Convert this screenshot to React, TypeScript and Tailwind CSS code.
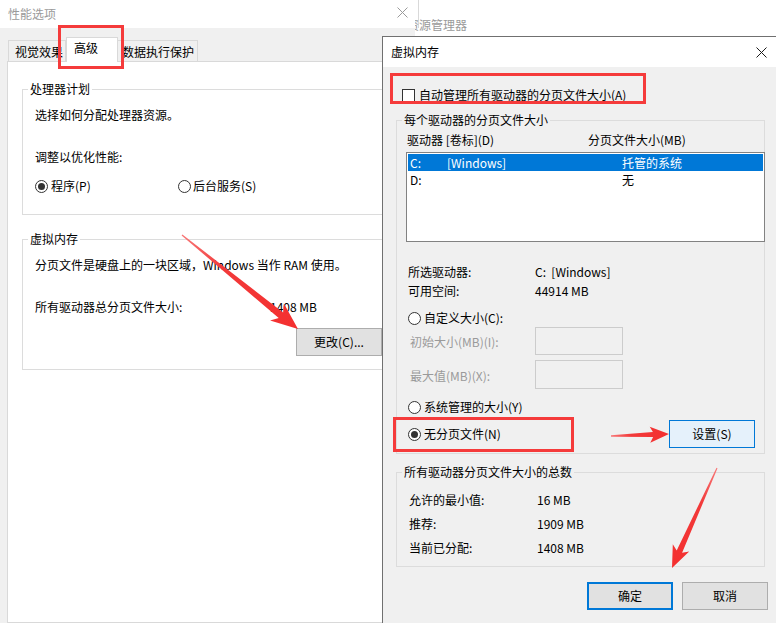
import React from "react";

type Pt = [number, number];

// Tapered annotation arrow: thin tail, widening shaft, barbed head.
function arrowPoints(
  t: Pt,
  p: Pt,
  headLen: number,
  headHalf: number,
  neckHalf: number,
  tailHalf: number,
  notch: number
) {
  const dx = p[0] - t[0];
  const dy = p[1] - t[1];
  const len = Math.hypot(dx, dy);
  const ux = dx / len;
  const uy = dy / len;
  const nx = -uy;
  const ny = ux;
  const bx = p[0] - ux * headLen;
  const by = p[1] - uy * headLen;
  const kx = p[0] - ux * (headLen - notch);
  const ky = p[1] - uy * (headLen - notch);
  const pts: Pt[] = [
    [t[0] + nx * tailHalf, t[1] + ny * tailHalf],
    [kx + nx * neckHalf, ky + ny * neckHalf],
    [bx + nx * headHalf, by + ny * headHalf],
    p,
    [bx - nx * headHalf, by - ny * headHalf],
    [kx - nx * neckHalf, ky - ny * neckHalf],
    [t[0] - nx * tailHalf, t[1] - ny * tailHalf],
  ];
  return pts.map((q) => q.map((v) => v.toFixed(1)).join(",")).join(" ");
}

const arrows: { id: string; t: Pt; p: Pt; h: number; hw: number; nw: number; tw: number; notch: number }[] = [
  { id: "a1", t: [182, 235], p: [298, 329], h: 27, hw: 11, nw: 3.5, tw: 0.6, notch: 5 },
  { id: "a2", t: [611, 436], p: [669, 434], h: 19, hw: 8, nw: 2.6, tw: 0.7, notch: 3 },
  { id: "a3", t: [717, 468], p: [672, 568], h: 22, hw: 9, nw: 3, tw: 0.6, notch: 4 },
];

function Radio({ checked }: { checked?: boolean }) {
  return (
    <span className="flex h-[13px] w-[13px] shrink-0 items-center justify-center rounded-full border border-[#333333] bg-white">
      {checked && <span className="h-[7px] w-[7px] rounded-full bg-[#333333]" />}
    </span>
  );
}

function Group({
  title,
  className,
  children,
}: {
  title: string;
  className?: string;
  children: React.ReactNode;
}) {
  return (
    <fieldset className={"min-w-0 border border-[#dcdcdc] " + (className ?? "")}>
      <legend className="ml-[5px] px-[2px] leading-4">{title}</legend>
      {children}
    </fieldset>
  );
}

function CloseGlyph({ size, color }: { size: number; color: string }) {
  return (
    <svg width={size} height={size} viewBox={`0 0 ${size} ${size}`} className="shrink-0">
      <path d={`M0.5 0.5 L${size - 0.5} ${size - 0.5} M${size - 0.5} 0.5 L0.5 ${size - 0.5}`} stroke={color} strokeWidth="1" />
    </svg>
  );
}

export default function App() {
  return (
    <div className="relative h-[623px] w-[776px] overflow-hidden bg-white font-['Microsoft_YaHei','Noto_Sans_CJK_SC','Noto_Sans',sans-serif] text-[12px] leading-4 text-black">
      {/* explorer window in the background */}
      <div className="absolute left-[400px] top-0 h-[80px] w-[400px] bg-white">
        <div className="ml-[18px] h-[28px] border-l border-[#d9d9d9]" />
        <div className="-mt-[11px] pl-[7px] text-[#9a9a9a]">资源管理器</div>
      </div>

      {/* 性能选项 window */}
      <div className="absolute left-0 top-0 flex h-[623px] w-[415px] flex-col bg-[#f0f0f0]">
        <div className="flex h-[28px] shrink-0 items-center justify-between bg-white pl-[8px] pr-[7px] text-[#9a9a9a]">
          <span>性能选项</span>
          <span className="-mt-[4px]">
            <CloseGlyph size={11} color="#9a9a9a" />
          </span>
        </div>

        <div className="flex flex-1 flex-col pl-[7px] pt-[9px]">
          {/* tabs */}
          <div className="relative z-10 -mb-px flex h-[25px] items-end">
            <div className="mb-px ml-px h-[21px] w-[58px] border border-b-0 border-[#d9d9d9] pl-[6px] pt-[3px]">视觉效果</div>
            <div className="h-[25px] w-[52px] border border-b-0 border-[#d9d9d9] bg-white pl-[7px] pt-[2px]">高级</div>
            <div className="mb-px h-[21px] w-[80px] border border-b-0 border-l-0 border-[#d9d9d9] pl-[4px] pt-[3px]">数据执行保护</div>
          </div>

          {/* tab page */}
          <div className="w-[402px] flex-1 border border-[#d9d9d9] bg-white px-[14px] pt-[19px]">
            <Group title="处理器计划" className="w-[372px]">
              <div className="pb-[20px] pl-[12px] pt-[10px]">
                <div>选择如何分配处理器资源。</div>
                <div className="mt-[26px]">调整以优化性能:</div>
                <div className="mt-[13px] flex h-4 items-center">
                  <div className="flex w-[143px] items-center gap-[3px]">
                    <Radio checked />
                    <span>程序(P)</span>
                  </div>
                  <div className="flex items-center gap-[2px]">
                    <Radio />
                    <span>后台服务(S)</span>
                  </div>
                </div>
              </div>
            </Group>

            <Group title="虚拟内存" className="mt-[16px] w-[372px]">
              <div className="pb-[13px] pl-[12px] pt-[10px]">
                <div>分页文件是硬盘上的一块区域，Windows 当作 RAM 使用。</div>
                <div className="mt-[26px] flex">
                  <span className="w-[235px]">所有驱动器总分页文件大小:</span>
                  <span>1408 MB</span>
                </div>
                <button className="ml-[261px] mt-[13px] flex h-[28px] w-[86px] items-center justify-center border border-[#adadad] bg-[#e1e1e1]">
                  更改(C)...
                </button>
              </div>
            </Group>
          </div>
        </div>
      </div>

      {/* 虚拟内存 dialog */}
      <div className="absolute left-[382px] top-[36px] flex h-[600px] w-[400px] flex-col border border-[#707070] bg-[#f0f0f0]">
        <div className="flex h-[30px] shrink-0 items-center justify-between bg-white pl-[8px] pr-[14px]">
          <span>虚拟内存</span>
          <CloseGlyph size={11} color="#1a1a1a" />
        </div>

        <div className="pl-[13px]">
          <div className="mt-[20px] flex h-4 items-center gap-[4px] pl-[6px]">
            <span className="h-[13px] w-[13px] border border-[#333333] bg-white" />
            <span>自动管理所有驱动器的分页文件大小(A)</span>
          </div>

          <Group title="每个驱动器的分页文件大小" className="mt-[9px] w-[369px]">
            <div className="pb-[5px] pl-[9px] pt-[4px]">
              <div className="flex pl-px">
                <span className="w-[181px]">驱动器 [卷标](D)</span>
                <span>分页文件大小(MB)</span>
              </div>
              <div className="mt-[4px] h-[90px] w-[359px] border border-[#828282] bg-white p-px">
                <div className="flex h-[17px] items-center bg-[#0078d7] pl-[2px] text-white">
                  <span className="w-[37px]">C:</span>
                  <span className="w-[175px]">[Windows]</span>
                  <span>托管的系统</span>
                </div>
                <div className="flex h-[17px] items-center pl-[2px]">
                  <span className="w-[212px]">D:</span>
                  <span>无</span>
                </div>
              </div>

              <div className="mt-[20px] flex h-[19px] items-center pl-[2px]">
                <span className="w-[127px]">所选驱动器:</span>
                <span>C:&nbsp;&nbsp;[Windows]</span>
              </div>
              <div className="flex h-[19px] items-center pl-[2px]">
                <span className="w-[127px]">可用空间:</span>
                <span>44914 MB</span>
              </div>

              <div className="mt-[10px] flex h-4 items-center gap-[3px] pl-[2px]">
                <Radio />
                <span>自定义大小(C):</span>
              </div>
              <div className="mt-[1px] flex h-[28px] items-center pl-[4px] text-[#9a9a9a]">
                <span className="w-[125px] pt-[2px]">初始大小(MB)(I):</span>
                <span className="h-[28px] w-[88px] border border-[#cccccc]" />
              </div>
              <div className="mt-[5px] flex h-[29px] items-center pl-[4px] text-[#9a9a9a]">
                <span className="w-[125px] pt-[3px]">最大值(MB)(X):</span>
                <span className="h-[29px] w-[88px] border border-[#cccccc]" />
              </div>

              <div className="mt-[10px] flex h-4 items-center gap-[3px] pl-[2px]">
                <Radio />
                <span>系统管理的大小(Y)</span>
              </div>
              <div className="mt-[5px] flex h-[28px] items-center">
                <div className="flex w-[263px] items-center gap-[3px] pl-[2px]">
                  <Radio checked />
                  <span>无分页文件(N)</span>
                </div>
                <button className="flex h-[28px] w-[86px] items-center justify-center border border-[#0078d7] bg-[#e5f1fb]">
                  设置(S)
                </button>
              </div>
            </div>
          </Group>

          <Group title="所有驱动器分页文件大小的总数" className="mt-[10px] w-[369px]">
            <div className="pb-[6px] pl-[12px] pt-[8px]">
              <div className="flex h-[24px] items-center">
                <span className="w-[128px]">允许的最小值:</span>
                <span>16 MB</span>
              </div>
              <div className="flex h-[24px] items-center">
                <span className="w-[128px]">推荐:</span>
                <span>1909 MB</span>
              </div>
              <div className="flex h-[24px] items-center">
                <span className="w-[128px]">当前已分配:</span>
                <span>1408 MB</span>
              </div>
            </div>
          </Group>

          <div className="ml-[191px] mt-[15px] flex gap-[9px]">
            <button className="flex h-[28px] w-[86px] items-center justify-center border-2 border-[#0078d7] bg-[#e1e1e1]">
              确定
            </button>
            <button className="flex h-[28px] w-[86px] items-center justify-center border border-[#adadad] bg-[#e1e1e1]">
              取消
            </button>
          </div>
        </div>
      </div>

      {/* red markup layer */}
      <svg className="pointer-events-none absolute left-0 top-0 z-50" width="776" height="623" viewBox="0 0 776 623">
        <defs>
          {arrows.map((a) => (
            <linearGradient key={a.id} id={a.id} gradientUnits="userSpaceOnUse" x1={a.t[0]} y1={a.t[1]} x2={a.p[0]} y2={a.p[1]}>
              <stop offset="0" stopColor="#f87878" />
              <stop offset="0.35" stopColor="#f23a3a" />
              <stop offset="1" stopColor="#f42f2f" />
            </linearGradient>
          ))}
        </defs>
        <rect x="59.5" y="26.5" width="63" height="41" fill="none" stroke="#f53b3b" strokeWidth="3" />
        <rect x="391.5" y="74.5" width="253" height="28" fill="none" stroke="#f53b3b" strokeWidth="3" />
        <rect x="394.5" y="418.5" width="178" height="32" fill="none" stroke="#f53b3b" strokeWidth="3" />
        {arrows.map((a) => (
          <polygon key={a.id} points={arrowPoints(a.t, a.p, a.h, a.hw, a.nw, a.tw, a.notch)} fill={`url(#${a.id})`} />
        ))}
      </svg>
    </div>
  );
}
